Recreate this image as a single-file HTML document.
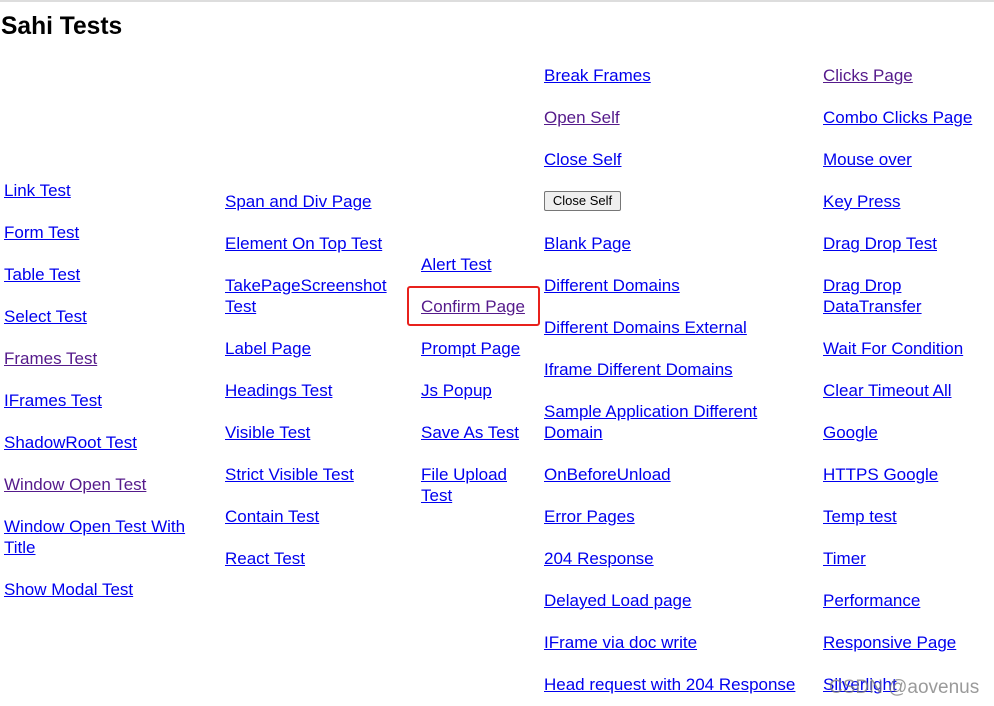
<!DOCTYPE html>
<html><head><meta charset="utf-8"><style>
html,body{margin:0;padding:0;background:#fff;width:994px;height:706px;overflow:hidden;position:relative;font-family:"Liberation Sans","Noto Sans CJK SC",sans-serif;}
.top{position:absolute;left:0;top:0;width:994px;height:2px;background:#ddd;}
h1{position:absolute;left:1px;top:11px;margin:0;font-size:24.6px;line-height:32px;font-weight:bold;color:#000;}
a{position:absolute;color:#0000ee;text-decoration:underline;font-size:17px;line-height:21px;white-space:nowrap;margin-top:1px;}
a.v{color:#551a8b;}
.btn{position:absolute;left:544px;top:191px;width:75px;height:18px;border:1px solid #767676;border-radius:2px;background:#efefef;font-size:13px;line-height:18px;text-align:center;color:#000;}
.red{position:absolute;left:407px;top:286px;width:129px;height:36px;border:2px solid #e8211c;border-radius:3px;}
.wm{position:absolute;left:829px;top:676px;font-size:19px;color:rgba(120,120,120,.75);line-height:24px;}
</style></head><body>
<div class="top"></div>
<h1>Sahi Tests</h1>

<a style="left:4px;top:179px">Link Test</a>
<a style="left:4px;top:221px">Form Test</a>
<a style="left:4px;top:263px">Table Test</a>
<a style="left:4px;top:305px">Select Test</a>
<a class="v" style="left:4px;top:347px">Frames Test</a>
<a style="left:4px;top:389px">IFrames Test</a>
<a style="left:4px;top:431px">ShadowRoot Test</a>
<a class="v" style="left:4px;top:473px">Window Open Test</a>
<a style="left:4px;top:515px">Window Open Test With<br>Title</a>
<a style="left:4px;top:578px">Show Modal Test</a>

<a style="left:225px;top:190px">Span and Div Page</a>
<a style="left:225px;top:232px">Element On Top Test</a>
<a style="left:225px;top:274px">TakePageScreenshot<br>Test</a>
<a style="left:225px;top:337px">Label Page</a>
<a style="left:225px;top:379px">Headings Test</a>
<a style="left:225px;top:421px">Visible Test</a>
<a style="left:225px;top:463px">Strict Visible Test</a>
<a style="left:225px;top:505px">Contain Test</a>
<a style="left:225px;top:547px">React Test</a>

<a style="left:421px;top:253px">Alert Test</a>
<a class="v" style="left:421px;top:295px">Confirm Page</a>
<a style="left:421px;top:337px">Prompt Page</a>
<a style="left:421px;top:379px">Js Popup</a>
<a style="left:421px;top:421px">Save As Test</a>
<a style="left:421px;top:463px">File Upload<br>Test</a>
<div class="red"></div>

<a style="left:544px;top:64px">Break Frames</a>
<a class="v" style="left:544px;top:106px">Open Self</a>
<a style="left:544px;top:148px">Close Self</a>
<div class="btn">Close Self</div>
<a style="left:544px;top:232px">Blank Page</a>
<a style="left:544px;top:274px">Different Domains</a>
<a style="left:544px;top:316px">Different Domains External</a>
<a style="left:544px;top:358px">Iframe Different Domains</a>
<a style="left:544px;top:400px">Sample Application Different<br>Domain</a>
<a style="left:544px;top:463px">OnBeforeUnload</a>
<a style="left:544px;top:505px">Error Pages</a>
<a style="left:544px;top:547px">204 Response</a>
<a style="left:544px;top:589px">Delayed Load page</a>
<a style="left:544px;top:631px">IFrame via doc write</a>
<a style="left:544px;top:673px">Head request with 204 Response</a>

<a class="v" style="left:823px;top:64px">Clicks Page</a>
<a style="left:823px;top:106px">Combo Clicks Page</a>
<a style="left:823px;top:148px">Mouse over</a>
<a style="left:823px;top:190px">Key Press</a>
<a style="left:823px;top:232px">Drag Drop Test</a>
<a style="left:823px;top:274px">Drag Drop<br>DataTransfer</a>
<a style="left:823px;top:337px">Wait For Condition</a>
<a style="left:823px;top:379px">Clear Timeout All</a>
<a style="left:823px;top:421px">Google</a>
<a style="left:823px;top:463px">HTTPS Google</a>
<a style="left:823px;top:505px">Temp test</a>
<a style="left:823px;top:547px">Timer</a>
<a style="left:823px;top:589px">Performance</a>
<a style="left:823px;top:631px">Responsive Page</a>
<a style="left:823px;top:673px">Silverlight</a>
<div class="wm">CSDN @aovenus</div>
</body></html>
